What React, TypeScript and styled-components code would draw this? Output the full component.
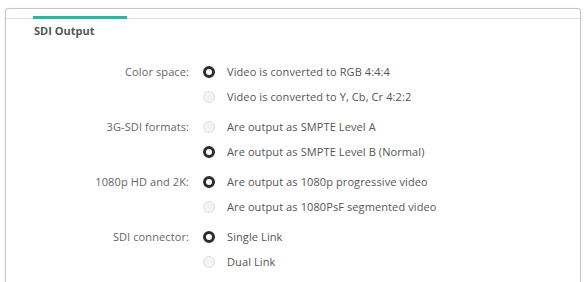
import styled, { createGlobalStyle } from 'styled-components';

type Option = { text: string; checked?: boolean };
type Group = { label: string; options: Option[] };

const groups: Group[] = [
  {
    label: 'Color space:',
    options: [
      { text: 'Video is converted to RGB 4:4:4', checked: true },
      { text: 'Video is converted to Y, Cb, Cr 4:2:2' },
    ],
  },
  {
    label: '3G-SDI formats:',
    options: [
      { text: 'Are output as SMPTE Level A' },
      { text: 'Are output as SMPTE Level B (Normal)', checked: true },
    ],
  },
  {
    label: '1080p HD and 2K:',
    options: [
      { text: 'Are output as 1080p progressive video', checked: true },
      { text: 'Are output as 1080PsF segmented video' },
    ],
  },
  {
    label: 'SDI connector:',
    options: [{ text: 'Single Link', checked: true }, { text: 'Dual Link' }],
  },
];

function App() {
  return (
    <>
      <GlobalStyle />
      <S.Page>
        <S.Panel>
          <S.TabStrip>
            <S.TabIndicator />
          </S.TabStrip>
          <S.Title>SDI Output</S.Title>
          <S.Form>
            {groups.map((g) => (
              <S.Group key={g.label}>
                <S.Label>{g.label}</S.Label>
                <S.Options>
                  {g.options.map((o) => (
                    <S.Option key={o.text}>
                      <S.Radio $checked={!!o.checked} />
                      <S.OptionText>{o.text}</S.OptionText>
                    </S.Option>
                  ))}
                </S.Options>
              </S.Group>
            ))}
          </S.Form>
        </S.Panel>
      </S.Page>
    </>
  );
}

export default App;

const GlobalStyle = createGlobalStyle`
  html, body {
    margin: 0;
    padding: 0;
    background: #ffffff;
    overflow: hidden;
  }
  body {
    font-family: "Open Sans", "Liberation Sans", sans-serif;
    color: #555;
  }
`;

const S = {
  Page: styled.div`
    width: 584px;
    height: 282px;
    padding: 8px 3px 0 5px;
    box-sizing: border-box;
    overflow: hidden;
  `,
  Panel: styled.div`
    height: 290px;
    border: 1px solid #c4c4c4;
    border-bottom: none;
    border-radius: 4px 4px 0 0;
    box-shadow: 0 0 1px rgba(0, 0, 0, 0.12);
  `,
  TabStrip: styled.div`
    height: 9px;
    border-bottom: 1px solid #dedede;
    display: flex;
    align-items: flex-end;
    padding-left: 27px;
  `,
  TabIndicator: styled.div`
    width: 94px;
    height: 3px;
    background: #3fae9c;
    margin-bottom: -1px;
  `,
  Title: styled.div`
    margin: 5px 0 0 28px;
    font-size: 11px;
    line-height: 14px;
    font-weight: 700;
    color: #555;
  `,
  Form: styled.div`
    margin-top: 21px;
    display: flex;
    flex-direction: column;
    gap: 5px;
  `,
  Group: styled.div`
    display: grid;
    grid-template-columns: 183px 1fr;
    column-gap: 14px;
    align-items: start;
  `,
  Label: styled.div`
    text-align: right;
    font-size: 11px;
    line-height: 25px;
    color: #666;
    letter-spacing: 0.1px;
  `,
  Options: styled.div`
    display: flex;
    flex-direction: column;
  `,
  Option: styled.div`
    display: flex;
    align-items: center;
    height: 25px;
    gap: 12px;
  `,
  Radio: styled.span<{ $checked: boolean }>`
    width: 12px;
    height: 12px;
    box-sizing: border-box;
    border-radius: 50%;
    flex-shrink: 0;
    background: ${({ $checked }) => ($checked ? '#fff' : '#f4f4f4')};
    border: ${({ $checked }) =>
      $checked ? '3px solid #2e2e2e' : '1px solid #dedede'};
  `,
  OptionText: styled.span`
    font-size: 11px;
    color: #555;
    white-space: nowrap;
    letter-spacing: 0.1px;
  `,
};
